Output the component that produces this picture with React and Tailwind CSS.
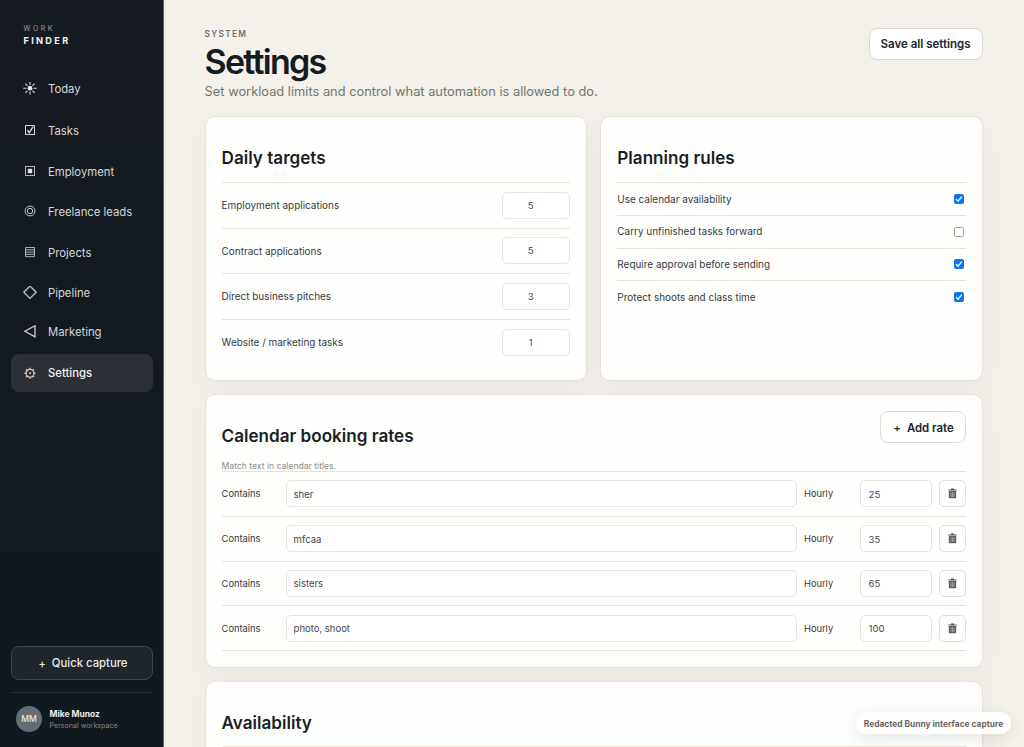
import { useState } from "react";
import clsx from "clsx";

const navItems = [
    { name: "Today", height: "h-10", icon: <TodayIcon /> },
    { name: "Tasks", height: "h-[37px]", icon: <TasksIcon /> },
    { name: "Employment", height: "h-[39px]", icon: <EmploymentIcon /> },
    { name: "Freelance leads", height: "h-9", icon: <LeadsIcon /> },
    { name: "Projects", height: "h-[39px]", icon: <ProjectsIcon /> },
    { name: "Pipeline", height: "h-[35px]", icon: <PipelineIcon /> },
    { name: "Marketing", height: "h-[38px]", icon: <MarketingIcon /> },
    { name: "Settings", height: "h-[38px]", icon: <SettingsIcon /> },
];

const targets = [
    { label: "Employment applications", value: 5 },
    { label: "Contract applications", value: 5 },
    { label: "Direct business pitches", value: 3 },
    { label: "Website / marketing tasks", value: 1 },
];

const initialRules = [
    { label: "Use calendar availability", on: true },
    { label: "Carry unfinished tasks forward", on: false },
    { label: "Require approval before sending", on: true },
    { label: "Protect shoots and class time", on: true },
];

const rates = [
    { match: "sher", hourly: 25 },
    { match: "mfcaa", hourly: 35 },
    { match: "sisters", hourly: 65 },
    { match: "photo, shoot", hourly: 100 },
];

function TodayIcon() {
    return (
        <svg width="14" height="14" viewBox="0 0 14 14" stroke="#d5d2cc" strokeWidth="1.1">
            <circle cx="7" cy="6.2" r="2.4" fill="#dfe8f0" stroke="none" />
            <path d="M7 0v2.8M7 9.6v2.8M.2 6.2h3.2M10.6 6.2h3.2M2.4 1.6l2.2 2.2M9.4 8.6l2.2 2.2M2.4 10.8l2.2-2.2M9.4 3.8l2.2-2.2" />
        </svg>
    );
}

function TasksIcon() {
    return (
        <svg width="14" height="14" viewBox="0 0 14 14" fill="none" stroke="#d5d2cc">
            <rect x="2.5" y="1.5" width="9" height="9" />
            <path d="M4.4 6.2l1.8 2.5 3.9-6" strokeWidth="1.4" />
        </svg>
    );
}

function EmploymentIcon() {
    return (
        <svg width="14" height="14" viewBox="0 0 14 14" fill="none" stroke="#b5b4b2">
            <rect x="2.5" y="1.5" width="9" height="9" />
            <rect x="4.8" y="3.8" width="4.4" height="4.4" fill="#e6e0da" stroke="none" />
        </svg>
    );
}

function LeadsIcon() {
    return (
        <svg width="14" height="14" viewBox="0 0 14 14" fill="none" stroke="#c4c1bd" strokeWidth="1">
            <circle cx="7" cy="6" r="4.9" />
            <circle cx="7" cy="6" r="2.7" />
        </svg>
    );
}

function ProjectsIcon() {
    return (
        <svg width="14" height="14" viewBox="0 0 14 14" fill="none" stroke="#c2c1be" strokeWidth=".9">
            <path d="M2.5 1.5h9v9.2h-9zM2.5 3.8h9M2.5 6.1h9M2.5 8.4h9" />
        </svg>
    );
}

function PipelineIcon() {
    return (
        <svg width="14" height="14" viewBox="0 0 14 14" fill="none" stroke="#b3c6d5" strokeWidth="1.3">
            <path d="M7 0L13.2 6.2 7 12.4 .8 6.2z" />
        </svg>
    );
}

function MarketingIcon() {
    return (
        <svg width="14" height="14" viewBox="0 0 14 14" fill="none" stroke="#d3cbc4" strokeWidth="1.3">
            <path d="M12 .8v11L1.9 6.3z" />
        </svg>
    );
}

function SettingsIcon() {
    return (
        <svg width="14" height="14" viewBox="0 0 14 14" fill="none" stroke="#d9bda8">
            <circle cx="7" cy="7.2" r="3.9" strokeWidth="1.3" />
            <circle cx="7" cy="7.2" r="1.1" fill="#c9a995" stroke="none" />
            <path
                d="M7 1.7v1.6M7 11.1v1.6M1.5 7.2h1.6M10.9 7.2h1.6M3.1 3.3l1.1 1.1M9.8 10l1.1 1.1M3.1 11.1l1.1-1.1M9.8 4.4l1.1-1.1"
                strokeWidth="1.5"
            />
        </svg>
    );
}

function TrashIcon() {
    return (
        <svg width="9" height="11" viewBox="0 0 9 11">
            <path d="M.3 1.4h8.4v1.1H.3zM3 .4h3v1.1H3z" fill="#4f5357" />
            <path d="M.8 3h7.4v6.4q0 .8-.8.8H1.6q-.8 0-.8-.8z" fill="#5c6065" />
            <path d="M3 4.2v4.8M4.5 4.2v4.8M6 4.2v4.8" stroke="#c4b5a8" strokeWidth=".7" />
        </svg>
    );
}

function Card({ className, children }) {
    return (
        <section
            className={clsx(
                "rounded-[10px] border border-[#e6e2d9] bg-[#fefefc] px-4 shadow-[0_10px_30px_rgba(60,50,30,0.05)]",
                className
            )}
        >
            {children}
        </section>
    );
}

function CardTitle({ children }) {
    return <h2 className="text-[17.1px] leading-5 font-semibold text-[#191e25]">{children}</h2>;
}

function Field({ value, className }) {
    return (
        <input
            defaultValue={value}
            className={clsx(
                "h-[27px] min-w-0 rounded-[5px] border border-[#e6e3dc] bg-white text-[9.5px] text-[#3f464b] outline-none",
                className
            )}
        />
    );
}

function Checkbox({ checked, onClick }) {
    return (
        <button
            onClick={onClick}
            className={clsx(
                "mr-[2px] flex size-[10px] items-center justify-center rounded-[2px]",
                checked ? "bg-[#0a75f5]" : "border border-[#a79f96] bg-white"
            )}
        >
            {checked && (
                <svg width="10" height="10" viewBox="0 0 10 10" fill="none" stroke="white" strokeWidth="1.4">
                    <path d="M2.1 5.2l2 2 3.7-4.6" />
                </svg>
            )}
        </button>
    );
}

function Sidebar() {
    return (
        <aside className="flex h-full w-[164px] shrink-0 flex-col border-r border-[#5d6064] bg-linear-to-b from-[#161b22] to-[#101820] px-[11px]">
            <div className="h-[46px] pt-6 pl-[12.5px]">
                <div className="text-[7px] leading-[10px] tracking-[2.5px] text-[#9a9c9e]">WORK</div>
                <div className="pt-[2px] text-[9.2px] leading-[10px] font-bold tracking-[2.3px] text-[#f3f2ef]">FINDER</div>
            </div>
            <nav className="mt-[23px] flex flex-col gap-[3px]">
                {navItems.map((item) => (
                    <a
                        key={item.name}
                        className={clsx(
                            "-mr-[1px] flex items-center gap-[11px] rounded-lg pl-3 text-[11.3px] whitespace-nowrap",
                            item.height,
                            item.name === "Settings" ? "bg-[#2b3037] font-medium text-[#f4f3f1]" : "text-[#d6d6d5]"
                        )}
                    >
                        {item.icon}
                        <span className="pt-px">{item.name}</span>
                    </a>
                ))}
            </nav>
            <button className="mt-auto -mr-[1px] flex h-[34px] items-center justify-center gap-1.5 rounded-lg border border-[#41464d] bg-[#1f262d] pt-[1.5px] pl-0.5 text-[11.3px] font-medium text-[#eceae7]">
                <span className="text-[11px]">+</span>
                Quick capture
            </button>
            <div className="mt-3 flex h-[55px] items-start gap-[7.5px] border-t border-[#2a3037] pt-[13px] pl-[5px]">
                <div className="flex size-[26px] items-center justify-center rounded-full bg-[#646c74] text-[8.6px] font-medium text-[#e6e4e1]">
                    MM
                </div>
                <div className="pt-[2px] whitespace-nowrap">
                    <div className="text-[8.5px] leading-[12px] font-bold text-[#efeeec]">Mike Munoz</div>
                    <div className="text-[7.1px] leading-[11px] text-[#85878a]">Personal workspace</div>
                </div>
            </div>
        </aside>
    );
}

export default function App() {
    const [rules, setRules] = useState(initialRules);

    const toggleRule = (index) => {
        setRules(rules.map((rule, i) => (i === index ? { ...rule, on: !rule.on } : rule)));
    };

    return (
        <div className="relative flex h-[747px] w-[1024px] overflow-hidden bg-[#f4f1eb] font-['Inter',sans-serif]">
            <Sidebar />
            <main className="shrink-0 pl-[40.6px]">
                <header className="flex h-[116px] w-[778px] items-start justify-between">
                    <div className="pt-[29px]">
                        <div className="text-[8.3px] leading-[10px] font-semibold tracking-[1.3px] text-[#6d7273]">SYSTEM</div>
                        <h1 className="mt-[3px] text-[34px] leading-10 font-semibold tracking-[-1.75px] text-[#151b23]">Settings</h1>
                        <p className="text-[12.85px] leading-[19px] text-[#73766f]">
                            Set workload limits and control what automation is allowed to do.
                        </p>
                    </div>
                    <button className="mt-7 h-8 w-[114px] rounded-lg border border-[#d9d8d2] bg-white pt-[1.5px] text-[11.5px] font-semibold whitespace-nowrap text-[#20252b]">
                        Save all settings
                    </button>
                </header>

                <div className="flex w-[778px] flex-col gap-[13.5px]">
                    <div className="grid h-[264.5px] grid-cols-2 gap-[13.5px]">
                        <Card className="pt-[30.5px]">
                            <CardTitle>Daily targets</CardTitle>
                            <div className="mt-[14.5px]">
                                {targets.map((target) => (
                                    <div
                                        key={target.label}
                                        className="flex h-[45.6px] items-center justify-between border-t border-[#e6e2da]"
                                    >
                                        <span className="pt-[0.7px] text-[9.95px] text-[#343b41]">{target.label}</span>
                                        <Field value={target.value} className="w-[68.3px] pr-[10px] text-center" />
                                    </div>
                                ))}
                            </div>
                        </Card>
                        <Card className="pt-[30.5px]">
                            <CardTitle>Planning rules</CardTitle>
                            <div className="mt-[14.5px]">
                                {rules.map((rule, index) => (
                                    <div
                                        key={rule.label}
                                        className="flex h-[32.75px] items-center justify-between border-t border-[#e6e2da]"
                                    >
                                        <span className="pt-[0.5px] text-[9.95px] text-[#343b41]">{rule.label}</span>
                                        <Checkbox checked={rule.on} onClick={() => toggleRule(index)} />
                                    </div>
                                ))}
                            </div>
                        </Card>
                    </div>

                    <Card className="h-[273.5px] pt-4">
                        <div className="flex h-[50px] items-start justify-between">
                            <div className="pt-[15px]">
                                <CardTitle>Calendar booking rates</CardTitle>
                            </div>
                            <button className="flex h-8 w-[86px] items-center justify-center gap-1.5 rounded-lg border border-[#dedbd3] bg-white pt-[2.5px] pl-[2px] text-[11.4px] font-semibold whitespace-nowrap text-[#20252b]">
                                <span className="text-[11px]">+</span>
                                Add rate
                            </button>
                        </div>
                        <p className="h-[10px] text-[8.6px] leading-[10px] text-[#8d8b84]">Match text in calendar titles.</p>
                        <div className="border-b border-[#e6e2da]">
                            {rates.map((rate) => (
                                <div
                                    key={rate.match}
                                    className="grid h-[44.8px] grid-cols-[57px_511px_49px_72px_27px] items-center gap-x-[7px] border-t border-[#e6e2da] text-[9.3px] text-[#343b41]"
                                >
                                    <span className="pt-px">Contains</span>
                                    <Field value={rate.match} className="px-[7px] pt-px" />
                                    <span className="pt-px pl-[0.4px]">Hourly</span>
                                    <Field value={rate.hourly} className="px-[8px] pt-px" />
                                    <button className="flex h-[27px] items-center justify-center rounded-[5px] border border-[#e2dfd8] bg-white">
                                        <TrashIcon />
                                    </button>
                                </div>
                            ))}
                        </div>
                    </Card>

                    <Card className="h-[200px] pt-[31px]">
                        <CardTitle>Availability</CardTitle>
                        <div className="mt-[13px] border-t border-[#e6e2da]" />
                    </Card>
                </div>
            </main>

            <div className="absolute right-[13px] bottom-[13px] flex h-[22px] w-[155px] items-center justify-center rounded-full bg-[#fefefd] pt-[2px] text-[8.4px] font-bold whitespace-nowrap text-[#6a655e] shadow-[0_4px_16px_rgba(30,30,30,0.1)]">
                Redacted Bunny interface capture
            </div>
        </div>
    );
}
